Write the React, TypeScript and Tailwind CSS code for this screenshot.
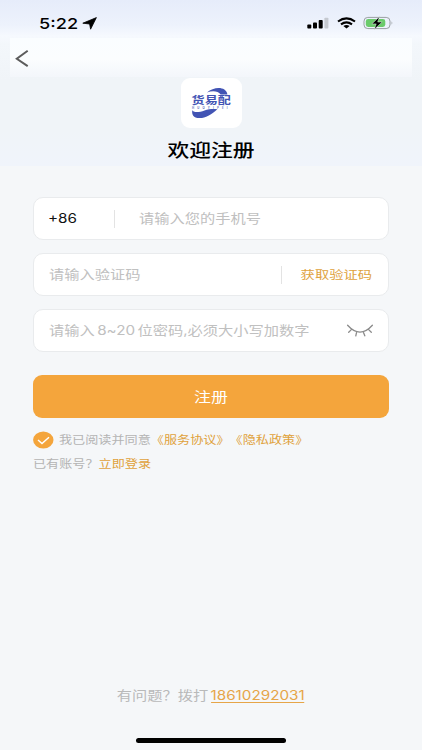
import React, { useState } from 'react';
import clsx from 'clsx';

const FONT = "font-['Inter','Noto_Sans_CJK_SC',sans-serif]";

// Text set 1.2x wider than its natural width
const Wide: React.FC<{ className?: string; children: React.ReactNode }> = ({ className, children }) => (
  <span className={clsx('inline-block whitespace-nowrap scale-x-[1.21]', className)}>{children}</span>
);

const StatusBar: React.FC = () => (
  <div className="h-[46px] pl-[39px] pr-[28px] flex items-center justify-between text-black">
    <div className="flex items-center">
      <span className="w-[43px] text-[15px] leading-none font-medium">
        <Wide className="origin-left">5:22</Wide>
      </span>
      <svg width="15" height="13" viewBox="0 0 15 13">
        <path d="M14.4 0.6 8.6 12.2 7.6 7 0.8 6.2Z" fill="#000" stroke="#000" strokeWidth="0.8" strokeLinejoin="round" />
      </svg>
    </div>
    <div className="flex items-center">
      <svg width="22" height="12" viewBox="0 0 22 12">
        <rect x="0.3" y="7.6" width="4" height="3.9" rx="0.9" />
        <rect x="6" y="5.6" width="4" height="5.9" rx="0.9" />
        <rect x="11.7" y="3" width="4" height="8.5" rx="0.9" />
        <rect x="17.4" y="0.7" width="4" height="10.8" rx="0.9" fill="#c5c9d0" />
      </svg>
      <svg className="ml-[8px]" width="19" height="12" viewBox="0 0 19 12" fill="none" stroke="#000" strokeWidth="2.1">
        <path d="M1 4.5Q9.5 -1.8 18 4.5" />
        <path d="M4 7.4Q9.5 3.3 15 7.4" />
        <path d="M6.4 9Q9.5 6.9 12.6 9L9.5 11.6Z" fill="#000" stroke="none" />
      </svg>
      <svg className="ml-[7px]" width="31" height="14" viewBox="0 0 31 14">
        <rect x="1" y="1.4" width="26" height="11.2" rx="3.8" fill="none" stroke="#9a9fa3" />
        <rect x="2.8" y="3" width="19.5" height="8" rx="2.4" fill="#6bcb6b" />
        <path d="M28.6 5.2v3.6q1.6-1.8 0-3.6" fill="#8f9397" />
        <path d="M16.6 0.6 8.8 7.9h4.4L11.2 13.4l8-7.4h-4.5Z" fill="#000" stroke="#e8f6ea" strokeWidth="0.5" />
      </svg>
    </div>
  </div>
);

const Logo: React.FC = () => (
  <div className="w-[61px] h-[50px] rounded-[9px] bg-white">
    <svg width="61" height="50" viewBox="0 0 61 50" fill="#4254b4">
      <path d="M26 14.4C33 8.4 45 8 46.4 16.4H39.6C37 12.8 31.5 12.4 26 14.4Z" />
      <path d="M11.3 32C12 34.6 18 34.6 23.5 32.4 28 30.8 33 30.9 36.4 31.2 30 37 24 40.3 18.5 40.1 12.2 39.9 10.6 36.5 11.3 32Z" />
      <g transform="translate(10.6 25.9) scale(1.26 1)">
        <text fontSize="10.4" fontWeight="700">货易配</text>
      </g>
      <text x="11" y="30.6" fontSize="2.8" fontWeight="600" letterSpacing="3.2">HUOYIPEI</text>
    </svg>
  </div>
);

const ClosedEye: React.FC = () => (
  <svg width="28" height="14" viewBox="0 0 28 14" fill="none" stroke="#8b8b8b" strokeWidth="1.3" strokeLinecap="round">
    <path d="M1.6 1.3Q14 15 26.4 1.3" />
    <path d="M5.6 5.4 2.7 8.2M10.5 8.6 9.8 11.8M17.5 8.6 18.8 11.8M22.4 5.4 25.3 8.2" />
  </svg>
);

const Field: React.FC<{ children: React.ReactNode }> = ({ children }) => (
  <div className="h-[43px] px-[15px] pt-px rounded-[10px] border border-[#e9ebed] bg-white flex items-center text-[12.6px] text-[#c0c0c0]">
    {children}
  </div>
);

export default function App() {
  const [agreed, setAgreed] = useState(true);

  return (
    <div className={clsx('w-[422px] h-[750px] overflow-hidden flex flex-col bg-[#f5f7f9]', FONT)}>
      <header className="h-[166px] shrink-0 flex flex-col bg-[linear-gradient(180deg,#e6ecfa_0px,#edf2fc_25px,#f6f9fe_36px,#f3f7fb_44px,#f0f4f8_80px,#f0f4f8_130px,#f0f4fb_166px)]">
        <StatusBar />
        <div className="-mt-2 h-[39px] mx-[10px] pl-[5px] pt-px flex items-center bg-[linear-gradient(180deg,#fafdff_0%,#fbfdfe_55%,#f3f6fb_100%)]">
          <button aria-label="返回">
            <svg width="14" height="18" viewBox="0 0 14 18" fill="none" stroke="#5c5c5c" strokeWidth="2">
              <path d="M12.7 1.8 1.8 9.8 12.7 17.2" />
            </svg>
          </button>
        </div>
        <div className="pt-px flex flex-col items-center">
          <Logo />
          <h1 className="mt-[9px] text-[18px] leading-[28px] font-medium text-black">
            <Wide>欢迎注册</Wide>
          </h1>
        </div>
      </header>

      <main className="px-[33px] pt-[31px]">
        <div className="flex flex-col gap-[13px]">
          <Field>
            <span className="w-[65px] text-[12.6px] text-[#111]">
              <Wide className="-ml-px origin-left">+86</Wide>
            </span>
            <i className="w-px h-[18px] bg-[#e3e3e3]" />
            <Wide className="ml-[24px] pt-px origin-left">请输入您的手机号</Wide>
          </Field>
          <Field>
            <Wide className="pt-px origin-left">请输入验证码</Wide>
            <i className="ml-auto w-px h-[18px] bg-[#e3e3e3]" />
            <button className="w-[90px] pt-px mr-px text-right text-[11.8px] text-[#e0a23c]">
              <Wide className="origin-right">获取验证码</Wide>
            </button>
          </Field>
          <Field>
            <Wide className="pt-px origin-left">
              请输入<span className="mx-[2px] [font-feature-settings:'calt'_0]">8~20</span>位密码,必须大小写加数字
            </Wide>
            <span className="ml-auto -mr-px">
              <ClosedEye />
            </span>
          </Field>
        </div>

        <button className="mt-[23px] w-full h-[43px] rounded-[9px] bg-[#f4a53c] text-[14px] text-white">
          <Wide>注册</Wide>
        </button>

        <div className="mt-[12px] h-[20px] flex items-center text-[10.85px] text-[#b4b4b4]">
          <button onClick={() => setAgreed(!agreed)} aria-label="同意协议" className="w-[27px]">
            <svg width="21" height="18" viewBox="0 0 21 18">
              <ellipse cx="10.3" cy="9" rx="10.2" ry="8.6" fill={agreed ? '#f4a53c' : '#d4d4d4'} />
              <path d="M5 9 9 12.5 16 6.3" fill="none" stroke="#fff" strokeWidth="1.5" />
            </svg>
          </button>
          <Wide className="pt-px -ml-px origin-left">
            我已阅读并同意
            <span className="text-[#e0a23c]">《服务协议》</span>
            <span className="inline-block text-[#e0a23c]">《隐私政策》</span>
          </Wide>
        </div>
        <div className="mt-[5px] h-[18px] leading-[18px] text-[10.85px] text-[#b4b4b4]">
          <Wide className="origin-left">
            已有账号？<span className="text-[#e0a23c]">立即登录</span>
          </Wide>
        </div>
      </main>

      <footer className="mt-auto flex flex-col items-center">
        <p className="text-[12.6px] leading-[20px] text-[#b9b9b9]">
          <Wide>
            有问题？拨打<span className="ml-[2px] text-[12.6px] text-[#e6a548] border-b border-[#e6a548] leading-[12px] inline-block">18610292031</span>
          </Wide>
        </p>
        <div className="mt-[32px] mb-[7px] w-[150px] h-[5px] rounded-full bg-black" />
      </footer>
    </div>
  );
}
